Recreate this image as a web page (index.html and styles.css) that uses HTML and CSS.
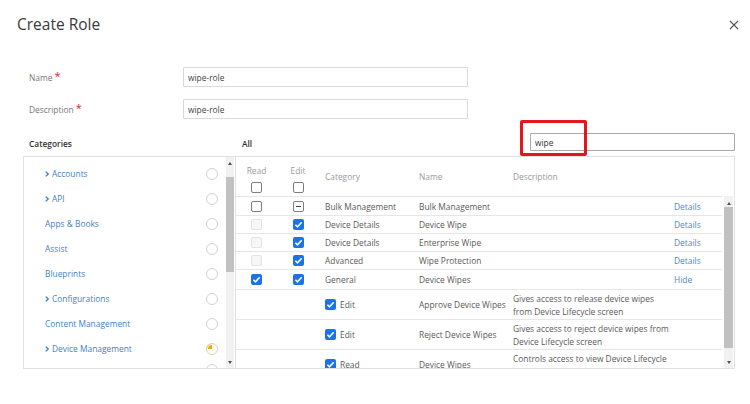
FILE: index.html
```html
<!DOCTYPE html>
<html lang="en">
<head>
<meta charset="utf-8">
<title>Create Role</title>
<link rel="stylesheet" href="styles.css">
</head>
<body>
<div class="dialog">
  <header class="dlg-head">
    <h1 class="dlg-title">Create Role</h1>
    <button class="close" type="button" aria-label="Close">
      <svg width="10" height="10" viewBox="0 0 10 10"><path d="M1 1 L9 9 M9 1 L1 9" stroke="#555" stroke-width="1.1" fill="none"/></svg>
    </button>
  </header>

  <div class="fields">
    <div class="field">
      <label class="field-label">Name<span class="req">*</span></label>
      <input class="text-input" type="text" value="wipe-role">
    </div>
    <div class="field">
      <label class="field-label">Description<span class="req">*</span></label>
      <input class="text-input" type="text" value="wipe-role">
    </div>
  </div>

  <section class="perm">
    <div class="perm-head">
      <div class="cat-title">Categories</div>
      <div class="all-title">All</div>
      <div class="search-wrap">
        <input class="search" type="text" value="wipe">
        <span class="highlight"></span>
      </div>
    </div>

    <div class="perm-body">
      <div class="cats">
        <ul class="cat-list">
          <li class="cat"><span class="chev"><svg width="4" height="6" viewBox="0 0 4 6"><path d="M0.7 0.6 L3.2 3 L0.7 5.4" stroke="#3f7fc8" stroke-width="1.3" fill="none"/></svg></span><span class="cat-name">Accounts</span><span class="radio"></span></li>
          <li class="cat"><span class="chev"><svg width="4" height="6" viewBox="0 0 4 6"><path d="M0.7 0.6 L3.2 3 L0.7 5.4" stroke="#3f7fc8" stroke-width="1.3" fill="none"/></svg></span><span class="cat-name">API</span><span class="radio"></span></li>
          <li class="cat"><span class="cat-name">Apps &amp; Books</span><span class="radio"></span></li>
          <li class="cat"><span class="cat-name">Assist</span><span class="radio"></span></li>
          <li class="cat"><span class="cat-name">Blueprints</span><span class="radio"></span></li>
          <li class="cat"><span class="chev"><svg width="4" height="6" viewBox="0 0 4 6"><path d="M0.7 0.6 L3.2 3 L0.7 5.4" stroke="#3f7fc8" stroke-width="1.3" fill="none"/></svg></span><span class="cat-name">Configurations</span><span class="radio"></span></li>
          <li class="cat"><span class="cat-name">Content Management</span><span class="radio"></span></li>
          <li class="cat"><span class="chev"><svg width="4" height="6" viewBox="0 0 4 6"><path d="M0.7 0.6 L3.2 3 L0.7 5.4" stroke="#3f7fc8" stroke-width="1.3" fill="none"/></svg></span><span class="cat-name">Device Management</span><span class="radio radio-partial"></span></li>
          <li class="cat cat-peek"><span class="radio"></span></li>
        </ul>
        <div class="vscroll cat-scroll">
          <span class="arrow-up"></span>
          <span class="thumb cat-thumb"></span>
          <span class="arrow-down"></span>
        </div>
      </div>

      <div class="table">
        <div class="grid thead">
          <div class="th th-check"><span class="th-label">Read</span><span class="cb"></span></div>
          <div class="th th-check"><span class="th-label">Edit</span><span class="cb"></span></div>
          <div class="th th-text pad">Category</div>
          <div class="th th-text">Name</div>
          <div class="th th-text">Description</div>
          <div class="th"></div>
        </div>
        <div class="tbody">
          <div class="rows">
            <div class="grid row">
              <div class="c c-check"><span class="cb"></span></div>
              <div class="c c-check"><span class="cb cb-ind"></span></div>
              <div class="c pad">Bulk Management</div>
              <div class="c">Bulk Management</div>
              <div class="c"></div>
              <div class="c"><a class="link" href="#">Details</a></div>
            </div>
            <div class="grid row">
              <div class="c c-check"><span class="cb cb-dis"></span></div>
              <div class="c c-check"><span class="cb cb-on"><svg width="11" height="11" viewBox="0 0 11 11"><path d="M2.4 5.7 L4.5 7.8 L8.7 3.3" stroke="#fff" stroke-width="1.6" fill="none"/></svg></span></div>
              <div class="c pad">Device Details</div>
              <div class="c">Device Wipe</div>
              <div class="c"></div>
              <div class="c"><a class="link" href="#">Details</a></div>
            </div>
            <div class="grid row">
              <div class="c c-check"><span class="cb cb-dis"></span></div>
              <div class="c c-check"><span class="cb cb-on"><svg width="11" height="11" viewBox="0 0 11 11"><path d="M2.4 5.7 L4.5 7.8 L8.7 3.3" stroke="#fff" stroke-width="1.6" fill="none"/></svg></span></div>
              <div class="c pad">Device Details</div>
              <div class="c">Enterprise Wipe</div>
              <div class="c"></div>
              <div class="c"><a class="link" href="#">Details</a></div>
            </div>
            <div class="grid row">
              <div class="c c-check"><span class="cb cb-dis"></span></div>
              <div class="c c-check"><span class="cb cb-on"><svg width="11" height="11" viewBox="0 0 11 11"><path d="M2.4 5.7 L4.5 7.8 L8.7 3.3" stroke="#fff" stroke-width="1.6" fill="none"/></svg></span></div>
              <div class="c pad">Advanced</div>
              <div class="c">Wipe Protection</div>
              <div class="c"></div>
              <div class="c"><a class="link" href="#">Details</a></div>
            </div>
            <div class="grid row row-open">
              <div class="c c-check"><span class="cb cb-on"><svg width="11" height="11" viewBox="0 0 11 11"><path d="M2.4 5.7 L4.5 7.8 L8.7 3.3" stroke="#fff" stroke-width="1.6" fill="none"/></svg></span></div>
              <div class="c c-check"><span class="cb cb-on"><svg width="11" height="11" viewBox="0 0 11 11"><path d="M2.4 5.7 L4.5 7.8 L8.7 3.3" stroke="#fff" stroke-width="1.6" fill="none"/></svg></span></div>
              <div class="c pad">General</div>
              <div class="c">Device Wipes</div>
              <div class="c"></div>
              <div class="c"><a class="link" href="#">Hide</a></div>
            </div>
            <div class="grid row sub">
              <div class="c"></div>
              <div class="c"></div>
              <div class="c pad sub-perm"><span class="cb cb-on"><svg width="11" height="11" viewBox="0 0 11 11"><path d="M2.4 5.7 L4.5 7.8 L8.7 3.3" stroke="#fff" stroke-width="1.6" fill="none"/></svg></span><span>Edit</span></div>
              <div class="c">Approve Device Wipes</div>
              <div class="c desc">Gives access to release device wipes<br>from Device Lifecycle screen</div>
              <div class="c"></div>
            </div>
            <div class="grid row sub">
              <div class="c"></div>
              <div class="c"></div>
              <div class="c pad sub-perm"><span class="cb cb-on"><svg width="11" height="11" viewBox="0 0 11 11"><path d="M2.4 5.7 L4.5 7.8 L8.7 3.3" stroke="#fff" stroke-width="1.6" fill="none"/></svg></span><span>Edit</span></div>
              <div class="c">Reject Device Wipes</div>
              <div class="c desc">Gives access to reject device wipes from<br>Device Lifecycle screen</div>
              <div class="c"></div>
            </div>
            <div class="grid row sub">
              <div class="c"></div>
              <div class="c"></div>
              <div class="c pad sub-perm"><span class="cb cb-on"><svg width="11" height="11" viewBox="0 0 11 11"><path d="M2.4 5.7 L4.5 7.8 L8.7 3.3" stroke="#fff" stroke-width="1.6" fill="none"/></svg></span><span>Read</span></div>
              <div class="c">Device Wipes</div>
              <div class="c desc">Controls access to view Device Lifecycle<br>Management Wipes screen</div>
              <div class="c"></div>
            </div>
          </div>
          <div class="vscroll tbl-scroll">
            <span class="arrow-up"></span>
            <span class="thumb tbl-thumb"></span>
            <span class="arrow-down"></span>
          </div>
        </div>
      </div>
    </div>
  </section>
</div>
</body>
</html>
```

FILE: styles.css
```css
* { box-sizing: border-box; }

html, body {
  margin: 0;
  padding: 0;
  background: #fff;
}

body {
  width: 750px;
  height: 404px;
  overflow: hidden;
  font-family: "Open Sans", "Liberation Sans", sans-serif;
  font-size: 8.4px;
  color: #555;
}

.dialog {
  padding: 13px 11px 0 0;
}

/* header */
.dlg-head {
  display: flex;
  justify-content: space-between;
  align-items: flex-start;
  padding-left: 17px;
}

.dlg-title {
  margin: 0;
  font-size: 15.5px;
  line-height: 22px;
  font-weight: 400;
  color: #3a3a3a;
}

.close {
  margin-top: 7px;
  padding: 0;
  border: 0;
  background: none;
  width: 10px;
  height: 10px;
  display: block;
}
.close svg { display: block; }

/* fields */
.fields {
  margin-top: 32px;
  margin-left: 29px;
  display: flex;
  flex-direction: column;
  gap: 12px;
}

.field {
  display: flex;
  align-items: center;
  height: 20px;
}

.field-label {
  width: 154px;
  color: #777;
  line-height: 12px;
}

.req {
  color: #d8262e;
  font-size: 11px;
  line-height: 1;
  margin-left: 2px;
  position: relative;
  top: -1px;
}

.text-input {
  width: 285px;
  height: 20px;
  border: 1px solid #d9d9d9;
  border-radius: 1px;
  padding: 0 4px;
  font-family: "Open Sans", "Liberation Sans", sans-serif;
  font-size: 8.4px;
  color: #444;
  background: #fff;
  outline: none;
}

/* permissions */
.perm {
  margin-left: 23px;
  width: 712px;
  margin-top: 14px;
}

.perm-head {
  display: flex;
  align-items: center;
  height: 18px;
}

.cat-title {
  width: 219px;
  padding-left: 6px;
  padding-top: 4px;
  line-height: 12px;
  font-weight: 600;
  color: #333;
}

.all-title {
  padding-top: 4px;
  line-height: 12px;
  font-weight: 600;
  color: #333;
}

.search-wrap {
  margin-left: auto;
  position: relative;
  width: 205px;
  height: 18px;
}

.search {
  display: block;
  width: 205px;
  height: 18px;
  border: 1px solid #a9a9a9;
  border-radius: 1px;
  padding: 0 4px;
  font-family: "Open Sans", "Liberation Sans", sans-serif;
  font-size: 8.4px;
  color: #333;
  background: #fff;
  outline: none;
}

.highlight {
  position: absolute;
  left: -10px;
  top: -13px;
  width: 67px;
  height: 36px;
  border: 3px solid #e3161d;
  border-radius: 2px;
  pointer-events: none;
}

.perm-body {
  margin-top: 5px;
  display: flex;
  height: 213px;
}

/* categories */
.cats {
  width: 212px;
  height: 213px;
  border: 1px solid #e2e2e2;
  border-right: 0;
  display: flex;
}

.cat-list {
  list-style: none;
  margin: 0;
  padding: 4px 0 0 0;
  flex: 1;
  overflow: hidden;
}

.cat {
  height: 25px;
  display: flex;
  align-items: center;
  padding-left: 21px;
  color: #3f7fc8;
}

.cat-peek {
  align-items: flex-start;
  padding-top: 3px;
}

.chev {
  width: 7px;
  display: flex;
  align-items: center;
}
.chev svg { display: block; }

.cat-name { white-space: nowrap; }

.radio {
  margin-left: auto;
  margin-right: 8px;
  width: 12px;
  height: 12px;
  border-radius: 50%;
  border: 1px solid #d2d2d2;
  background: #fff;
  flex: none;
}

.radio-partial {
  border-color: #e2cfae;
  background: conic-gradient(from 270deg, #f5a10a 0deg 90deg, #fff 90deg 360deg);
  box-shadow: inset 0 0 0 1px #fff;
}

/* scrollbars */
.vscroll {
  background: #f1f1f1;
  display: flex;
  flex-direction: column;
  align-items: center;
}

.cat-scroll {
  width: 8px;
  margin-right: 1px;
}

.arrow-up,
.arrow-down {
  width: 100%;
  height: 12px;
  display: flex;
  align-items: center;
  justify-content: center;
  flex: none;
}
.arrow-up::before {
  content: "";
  border-left: 2.5px solid transparent;
  border-right: 2.5px solid transparent;
  border-bottom: 3px solid #505050;
}
.arrow-down::before {
  content: "";
  border-left: 2.5px solid transparent;
  border-right: 2.5px solid transparent;
  border-top: 3px solid #505050;
}
.arrow-down { margin-top: auto; }

.thumb {
  width: 100%;
  background: #c1c1c1;
  flex: none;
}

.cat-thumb {
  margin-top: 8px;
  height: 95px;
}

/* table */
.table {
  width: 500px;
  height: 213px;
  border: 1px solid #e2e2e2;
  display: flex;
  flex-direction: column;
}

.grid {
  display: grid;
  grid-template-columns: 41px 42px 100px 94px 161px 1fr;
}

.thead {
  height: 39px;
  flex: none;
}

.th {
  color: #999;
}

.th-check {
  display: flex;
  flex-direction: column;
  align-items: center;
  padding-top: 8px;
}

.th-label {
  line-height: 11px;
  margin-bottom: 6px;
}

.th-text {
  align-self: center;
  line-height: 12px;
  padding-top: 1px;
}

.pad { padding-left: 6px; }

.tbody {
  flex: 1;
  display: flex;
  min-height: 0;
}

.rows {
  width: 486px;
  border-top: 1px solid #e6e6e6;
  padding-top: 1px;
  overflow: hidden;
}

.row {
  height: 18px;
  border-bottom: 1px solid #e6e6e6;
  align-items: center;
}

.row-open { height: 20px; }

.row.sub { height: 30px; }

.c {
  white-space: nowrap;
  line-height: 12px;
  color: #5a5a5a;
}

.c-check {
  display: flex;
  justify-content: center;
}

.desc {
  line-height: 13px;
  padding-top: 1px;
}

.sub-perm {
  display: flex;
  align-items: center;
  gap: 4px;
}

.link {
  color: #4a89cf;
  text-decoration: none;
}

/* checkboxes */
.cb {
  display: block;
  width: 11px;
  height: 11px;
  border: 1px solid #7d7d7d;
  border-radius: 2px;
  background: #fff;
  position: relative;
  flex: none;
}

.cb-dis {
  border-color: #e3e3e3;
  background: #f7f7f7;
}

.cb-ind::after {
  content: "";
  position: absolute;
  left: 2px;
  right: 2px;
  top: 4px;
  height: 1.2px;
  background: #444;
}

.cb-on {
  border: 0;
  background: #1a73e8;
}
.cb-on svg {
  display: block;
}

.tbl-scroll {
  width: 9px;
  margin-left: 2px;
  padding-top: 1px;
}

.tbl-thumb {
  margin-top: -2px;
  height: 141px;
}
```
